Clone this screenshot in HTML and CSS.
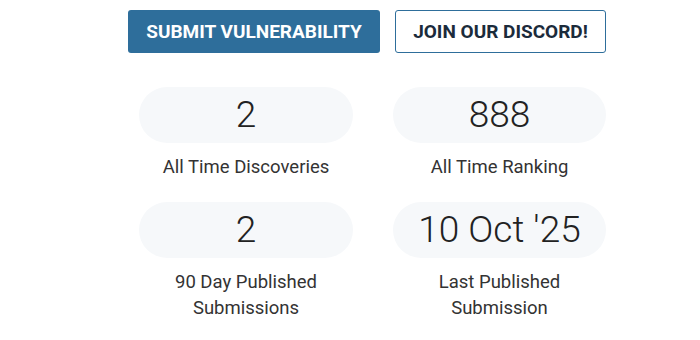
FILE: index.html
```html
<!DOCTYPE html>
<html lang="en">
<head>
    <meta charset="UTF-8">
    <title>Researcher Stats</title>
    <link rel="stylesheet" href="styles.css">
</head>
<body>

<div class="actions">
    <a href="#" class="btn btn-primary">Submit Vulnerability</a>
    <a href="#" class="btn btn-outline">Join our Discord!</a>
</div>

<!-- Estatísticas do pesquisador -->
<div class="stats">
    <div class="stat">
        <div class="stat-value">2</div>
        <div class="stat-label">All Time Discoveries</div>
    </div>
    <div class="stat">
        <div class="stat-value">888</div>
        <div class="stat-label">All Time Ranking</div>
    </div>
    <div class="stat">
        <div class="stat-value">2</div>
        <div class="stat-label">90 Day Published<br>Submissions</div>
    </div>
    <div class="stat">
        <div class="stat-value">10 Oct '25</div>
        <div class="stat-label">Last Published<br>Submission</div>
    </div>
</div>

</body>
</html>
```

FILE: styles.css
```css
body {
    font-family: 'Roboto', 'Liberation Sans', sans-serif;
    background-color: #fff;
    color: #333;
    margin: 0;
    padding: 0;
}
.actions {
    display: flex;
    gap: 15px;
    margin: 10px 0 0 128px;
}
.btn {
    display: flex;
    align-items: center;
    justify-content: center;
    box-sizing: border-box;
    height: 43px;
    font-size: 19px;
    font-weight: bold;
    text-transform: uppercase;
    text-decoration: none;
    border-radius: 3px;
}
.btn-primary {
    width: 252px;
    background-color: #2e6e9b;
    color: #fff;
}
.btn-outline {
    width: 211px;
    border: 1px solid #2e6e9b;
    color: #1b2b3b;
}
.stats {
    display: grid;
    grid-template-columns: 214px 213px;
    column-gap: 40px;
    row-gap: 22px;
    margin: 34px 0 0 139px;
}
.stat {
    text-align: center;
}
.stat-value {
    height: 56px;
    line-height: 56px;
    background-color: #f6f8fa;
    border-radius: 28px;
    font-size: 37px;
    font-weight: 300;
    color: #222;
}
.stat-label {
    margin-top: 11px;
    font-size: 18.5px;
    line-height: 26px;
    color: #333;
}
```
